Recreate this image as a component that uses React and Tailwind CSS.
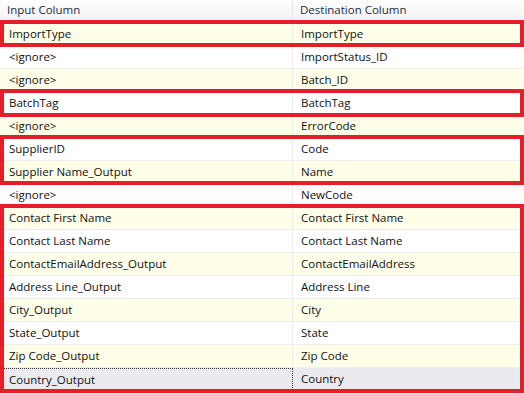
import React from "react";

const rows = [
  ["ImportType", "ImportType"],
  ["<ignore>", "ImportStatus_ID"],
  ["<ignore>", "Batch_ID"],
  ["BatchTag", "BatchTag"],
  ["<ignore>", "ErrorCode"],
  ["SupplierID", "Code"],
  ["Supplier Name_Output", "Name"],
  ["<ignore>", "NewCode"],
  ["Contact First Name", "Contact First Name"],
  ["Contact Last Name", "Contact Last Name"],
  ["ContactEmailAddress_Output", "ContactEmailAddress"],
  ["Address Line_Output", "Address Line"],
  ["City_Output", "City"],
  ["State_Output", "State"],
  ["Zip Code_Output", "Zip Code"],
  ["Country_Output", "Country"],
];

const boxes = [
  "top-[20px] h-[27px]",
  "top-[89px] h-[28px]",
  "top-[135px] h-[50px]",
  "top-[204px] h-[189px]",
];

export default function App() {
  return (
    <div
      className="relative w-[524px] h-[393px] overflow-hidden bg-white text-[11.5px] text-[#111]"
      style={{ fontFamily: '"Open Sans", "Noto Sans", "Liberation Sans", sans-serif' }}
    >
      <div className="grid grid-cols-[293px_1fr] h-[23px] bg-gradient-to-b from-white to-[#f1f2f4] border-b border-[#e4e6ea] text-[#1e2b3c]">
        <div className="pl-[7px] pb-[3px] flex items-center border-r border-[#e4e6ea]">Input Column</div>
        <div className="pl-[7px] pb-[3px] flex items-center">Destination Column</div>
      </div>
      {rows.map(([a, b], i) => {
        const last = i === rows.length - 1;
        const bg = last ? "bg-[#e9ebee]" : i % 2 === 0 ? "bg-[#fefee9]" : "bg-white";
        return (
          <div key={i} className={`grid grid-cols-[293px_1fr] h-[23px] border-b border-[#eeeeee] ${bg}`}>
            <div
              className={
                last
                  ? "pl-[9px] flex items-center border-t border-r border-dotted border-t-[#333] border-r-[#333]"
                  : "pl-[9px] flex items-center border-r border-[#ececec]"
              }
            >
              {a}
            </div>
            <div className="pl-[8px] flex items-center">{b}</div>
          </div>
        );
      })}
      {boxes.map((c, i) => (
        <div key={i} className={`absolute left-0 w-[524px] border-4 border-[#e3202a] pointer-events-none ${c}`} />
      ))}
    </div>
  );
}
